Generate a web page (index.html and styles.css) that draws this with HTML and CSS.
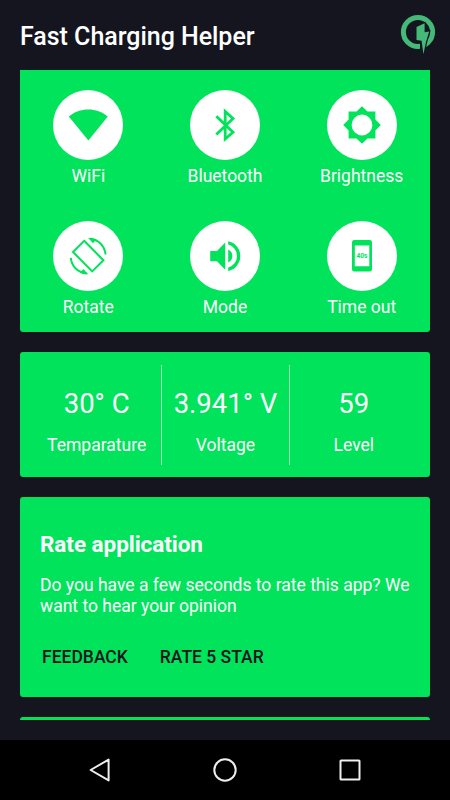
FILE: index.html
```html
<!DOCTYPE html>
<html lang="en">
<head>
    <meta charset="UTF-8">
    <meta name="viewport" content="width=device-width, initial-scale=1.0">
    <title>Fast Charging Helper</title>
    <link rel="stylesheet" href="styles.css">
</head>
<body>
    <header class="header">
        <h1>Fast Charging Helper</h1>
        <svg class="logo" viewBox="0 0 36 42">
            <circle cx="18" cy="18" r="14.6" fill="none" stroke="#45b978" stroke-width="5"/>
            <path d="M16.5 13L24.6 9.2V18.3L29.2 17.5L26.5 27L23.4 40.3L21.3 26.8L16.5 26Z" fill="#45b978" stroke="#151520" stroke-width="2"/>
            <path d="M20 27.5H22.5V37H20Z" fill="#151520"/>
            <path d="M16.5 13L24.6 9.2V18.3L29.2 17.5L26 28L23.4 40.3L21.6 26.8L16.5 26Z" fill="#45b978"/>
        </svg>
    </header>
    <main class="content">
        <section class="card toggles">
            <div class="toggle">
                <div class="circle">
                    <svg viewBox="0 0 70 70"><path d="M15.8 26.5C26.5 17 44 17 54.8 26.5L35.4 50.5Z"/></svg>
                </div>
                <span>WiFi</span>
            </div>
            <div class="toggle">
                <div class="circle">
                    <svg viewBox="0 0 70 70"><path class="line" d="M26.3 26.3L43 42.2L35.2 49V21.5L43 28.5L26.3 44.5"/></svg>
                </div>
                <span>Bluetooth</span>
            </div>
            <div class="toggle">
                <div class="circle">
                    <svg viewBox="0 0 70 70"><path fill-rule="evenodd" d="M35 16.2L40.5 21.6H48.4V29.5L53.8 35L48.4 40.5V48.4H40.5L35 53.8L29.5 48.4H21.6V40.5L16.2 35L21.6 29.5V21.6H29.5ZM35 24.6A10.4 10.4 0 1 0 35 45.4A10.4 10.4 0 1 0 35 24.6Z"/></svg>
                </div>
                <span>Brightness</span>
            </div>
            <div class="toggle">
                <div class="circle">
                    <svg viewBox="0 0 70 70">
                        <path class="thin" d="M31.2 19.8L50.4 39.2L39.2 50.4L20 31Z"/>
                        <path class="thin" d="M37 17.8C45.5 18.5 51.8 25 52.6 33.5M33.4 52.4C25 51.7 18.6 45.3 17.8 36.8"/>
                        <path d="M35 16.8L43.5 18.2L40 22.2ZM35.4 53.4L27 52L30.4 48Z"/>
                    </svg>
                </div>
                <span>Rotate</span>
            </div>
            <div class="toggle">
                <div class="circle">
                    <svg viewBox="0 0 70 70">
                        <path d="M20.2 30H27L35.2 21.5V48.7L27 40.2H20.2ZM38.2 28.6A7.2 7.2 0 0 1 38.2 41.6Z"/>
                        <path d="M38.2 20.3A15.1 15.1 0 0 1 38.2 49.9V46.6A11.9 11.9 0 0 0 38.2 23.6Z"/>
                    </svg>
                </div>
                <span>Mode</span>
            </div>
            <div class="toggle">
                <div class="circle">
                    <svg viewBox="0 0 70 70">
                        <path fill-rule="evenodd" d="M27.3 19H42.7Q45 19 45 21.3V48.2Q45 50.5 42.7 50.5H27.3Q25 50.5 25 48.2V21.3Q25 19 27.3 19ZM27.8 24.6V45.3H42.3V24.6Z"/>
                        <text x="35" y="37.3" text-anchor="middle">40s</text>
                    </svg>
                </div>
                <span>Time out</span>
            </div>
        </section>
        <section class="card stats">
            <div class="stat">
                <div class="value">30° C</div>
                <div class="name">Temparature</div>
            </div>
            <div class="stat">
                <div class="value">3.941° V</div>
                <div class="name">Voltage</div>
            </div>
            <div class="stat">
                <div class="value">59</div>
                <div class="name">Level</div>
            </div>
        </section>
        <section class="card rate">
            <h2>Rate application</h2>
            <p>Do you have a few seconds to rate this app? We want to hear your opinion</p>
            <div class="actions">
                <a>FEEDBACK</a>
                <a>RATE 5 STAR</a>
            </div>
        </section>
        <section class="card next"></section>
    </main>
    <nav class="navbar">
        <svg viewBox="0 0 24 24"><path d="M20.6 1.6V22.4L2.6 12Z"/></svg>
        <svg viewBox="0 0 24 24"><circle cx="12" cy="12" r="10.7"/></svg>
        <svg viewBox="0 0 24 24"><rect x="2.5" y="2.5" width="19" height="19" rx="0.6"/></svg>
    </nav>
</body>
</html>
```
FILE: styles.css
```css
* {
    box-sizing: border-box;
}

body {
    font-family: Roboto, sans-serif;
    font-size: 17.5px;
    margin: 0;
    height: 800px;
    background-color: #151520;
    color: white;
    display: flex;
    flex-direction: column;
    overflow: hidden;
}

.header {
    height: 70px;
    padding: 0 14px 0 20px;
    display: flex;
    justify-content: space-between;
    align-items: center;
}

.header h1 {
    margin: 2px 0 0;
    font-size: 25px;
    font-weight: 500;
    letter-spacing: -0.03px;
}

.logo {
    width: 36px;
    height: 42px;
}

.content {
    height: 650px;
    margin: 0 20px 20px;
    display: flex;
    flex-direction: column;
    gap: 20px;
    overflow: hidden;
}

.card {
    background-color: #00e35b;
    border-radius: 3px;
    flex-shrink: 0;
}

.toggles {
    height: 262px;
    padding-top: 20.2px;
    display: grid;
    grid-template-columns: repeat(3, 1fr);
    grid-auto-rows: 131.2px;
    border-radius: 0 0 3px 3px;
}

.toggle {
    display: flex;
    flex-direction: column;
    align-items: center;
    gap: 5.4px;
    line-height: 21px;
}

.circle {
    width: 70px;
    height: 70px;
    border-radius: 50%;
    background-color: white;
}

.circle svg {
    display: block;
    fill: #00e35b;
}

.circle .line {
    fill: none;
    stroke: #00e35b;
    stroke-width: 2.8;
}

.circle .thin {
    fill: none;
    stroke: #00e35b;
    stroke-width: 2;
}

.circle text {
    font-size: 6.5px;
    font-weight: 700;
}

.stats {
    height: 125px;
    padding: 12.5px;
    display: grid;
    grid-template-columns: repeat(3, 1fr);
}

.stat {
    padding-top: 23px;
    text-align: center;
    white-space: nowrap;
}

.stat + .stat {
    border-left: 1px solid rgba(255, 255, 255, 0.65);
}

.value {
    font-size: 27.5px;
    line-height: 32px;
}

.name {
    margin-top: 15px;
    line-height: 21px;
}

.rate {
    height: 200px;
    padding: 34px 20px 0;
}

.rate h2 {
    margin: 0;
    font-size: 22.5px;
    font-weight: 700;
    line-height: 26px;
    letter-spacing: -0.05px;
}

.rate p {
    margin: 18px 0 0;
    line-height: 20.5px;
}

.actions {
    margin-top: 31px;
    padding-left: 2px;
    display: flex;
    gap: 32px;
    color: #151520;
    font-weight: 500;
    line-height: 21px;
}

.next {
    height: 20px;
}

.navbar {
    height: 60px;
    padding-left: 37.5px;
    padding-right: 37.5px;
    background-color: black;
    display: grid;
    grid-template-columns: repeat(3, 1fr);
    align-items: center;
    justify-items: center;
}

.navbar svg {
    width: 24px;
    height: 24px;
    fill: none;
    stroke: #eeeeee;
    stroke-width: 2;
    stroke-linejoin: round;
}
```
